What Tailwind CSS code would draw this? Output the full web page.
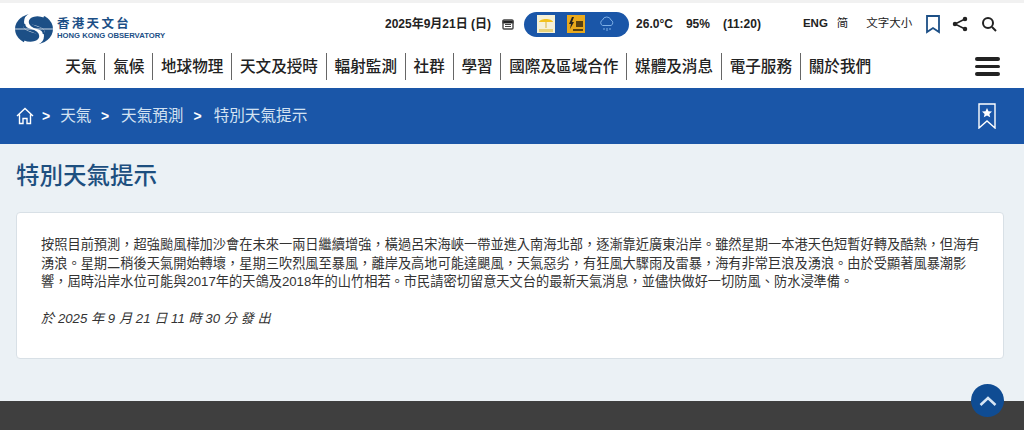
<!DOCTYPE html>
<html lang="zh-TW">
<head>
    <meta charset="UTF-8">
    <meta name="viewport" content="width=device-width, initial-scale=1.0">
    <title>特別天氣提示 - 香港天文台</title>
    <script src="https://cdn.jsdelivr.net/npm/@tailwindcss/browser@4"></script>
</head>
<body class="relative h-[430px] overflow-hidden bg-[#ebf1f5] font-['Liberation_Sans','Noto_Sans_CJK_TC',sans-serif] text-[#222]">
    <!-- Header -->
    <header class="h-[88px] bg-white border-t-[3px] border-[#f1f1f1]">
        <div class="flex h-[42px] items-center pl-[15px]">
            <!-- Logo -->
            <div class="mt-[9px] flex w-[370px] items-center gap-[4px]">
                <svg class="h-[32px] w-[38px] shrink-0" viewBox="0 0 38 32">
                    <ellipse cx="19" cy="16" rx="19" ry="15.500" fill="#1c4f86"/>
                    <path d="M29 3C20 0 12 3 12 9c0 4 5 6 10 7 3 1 5 2 5 4" fill="none" stroke="#fff" stroke-width="6"/>
                    <path d="M9 29c9 3 17 0 17-6 0-4-5-6-10-7-3-1-5-2-5-4" fill="none" stroke="#fff" stroke-width="6"/>
                    <path d="M29 6C22 3 15 5 15 9c0 3 4 5 8 6 4 1 6 3 6 6" fill="none" stroke="#1c4f86" stroke-width="2.500"/>
                    <path d="M9 26c7 3 14 1 14-3 0-3-4-5-8-6-4-1-6-3-6-6" fill="none" stroke="#1c4f86" stroke-width="2.500"/>
                    <path d="M0 16h38" stroke="#fff" stroke-width="0.800"/>
                </svg>
                <div class="flex flex-col leading-none text-[#1c4f86]">
                    <span class="text-[12.500px] font-bold leading-[13px] tracking-[2.300px]">香港天文台</span>
                    <span class="text-[7.700px] font-bold leading-[9px]">HONG KONG OBSERVATORY</span>
                </div>
            </div>
            <!-- Date and weather -->
            <span class="text-[12px] font-bold">2025年9月21日 (日)</span>
            <svg class="ml-[11px] h-[12px] w-[12px]" viewBox="0 0 12 12">
                <rect x="1" y="2" width="10" height="9" rx="1" fill="none" stroke="#444" stroke-width="1.400"/>
                <path d="M1 3h10v2H1zM3 6.500h6M3 8.500h6" stroke="#444" stroke-width="1.200"/>
            </svg>
            <div class="ml-[10px] flex h-[25px] w-[105px] items-center rounded-full bg-[#1a56a8] pl-[13px]">
                <svg class="h-[18px] w-[18px]" viewBox="0 0 18 18">
                    <rect width="18" height="18" fill="#f6f1d8"/>
                    <path d="M2 7c1-4 13-4 14 0z" fill="#f3c21d"/>
                    <path d="M9 7v6" stroke="#d9b33a"/>
                    <rect x="2" y="14" width="14" height="3" fill="#e8d27a"/>
                </svg>
                <svg class="ml-[12px] h-[18px] w-[18px]" viewBox="0 0 18 18">
                    <rect width="18" height="18" fill="#e9a91c"/>
                    <path d="M5 2 2 9h2l-1 5 4-7H5l2-5z" fill="#222"/>
                    <rect x="9" y="6" width="7" height="6" fill="#5a4210"/>
                    <rect x="6" y="14" width="10" height="2" fill="#5a4210"/>
                </svg>
                <svg class="ml-[13px] h-[18px] w-[18px]" viewBox="0 0 18 18" fill="none" stroke="#7fb0e6" stroke-width="1">
                    <path d="M4.500 10.500a3 3 0 0 1 0-5.500 4.500 4.500 0 0 1 8.500 0 3 3 0 0 1 0 5.500z"/>
                    <path d="M6 13v2M9 13v3M12 13v2"/>
                </svg>
            </div>
            <span class="ml-[7px] text-[12px] font-bold">26.0°C</span>
            <span class="ml-[13px] text-[12px] font-bold">95%</span>
            <span class="ml-[13px] text-[12px] font-bold">(11:20)</span>
            <span class="ml-[42px] text-[11.500px] font-bold">ENG</span>
            <span class="ml-[9px] text-[11.500px]">简</span>
            <span class="ml-[18px] text-[11.500px]">文字大小</span>
            <svg class="ml-[14px] h-[19px] w-[14px]" viewBox="0 0 14 19" fill="none" stroke="#1c4f86" stroke-width="1.800">
                <path d="M1 1h12v16l-6-4-6 4z"/>
            </svg>
            <svg class="ml-[12px] h-[16px] w-[16px]" viewBox="0 0 16 16" fill="none" stroke="#222" stroke-width="1.500">
                <path d="M13 3 3 8l10 5"/>
                <circle cx="13" cy="3" r="1.500" fill="#222"/>
                <circle cx="3" cy="8" r="1.500" fill="#222"/>
                <circle cx="13" cy="13" r="1.500" fill="#222"/>
            </svg>
            <svg class="ml-[13px] h-[16px] w-[16px]" viewBox="0 0 16 16" fill="none" stroke="#222" stroke-width="2">
                <circle cx="7" cy="7" r="5"/>
                <path d="m11 11 4 4"/>
            </svg>
        </div>
        <!-- Main nav -->
        <nav class="flex h-[43px] items-center pl-[57.500px] text-[15.600px] font-medium text-[#222]">
            <a class="px-[7.820px] leading-[27px]">天氣</a>
            <a class="border-l border-[#666] px-[7.820px] leading-[27px]">氣候</a>
            <a class="border-l border-[#666] px-[7.820px] leading-[27px]">地球物理</a>
            <a class="border-l border-[#666] px-[7.820px] leading-[27px]">天文及授時</a>
            <a class="border-l border-[#666] px-[7.820px] leading-[27px]">輻射監測</a>
            <a class="border-l border-[#666] px-[7.820px] leading-[27px]">社群</a>
            <a class="border-l border-[#666] px-[7.820px] leading-[27px]">學習</a>
            <a class="border-l border-[#666] px-[7.820px] leading-[27px]">國際及區域合作</a>
            <a class="border-l border-[#666] px-[7.820px] leading-[27px]">媒體及消息</a>
            <a class="border-l border-[#666] px-[7.820px] leading-[27px]">電子服務</a>
            <a class="border-l border-[#666] px-[7.820px] leading-[27px]">關於我們</a>
            <div class="ml-auto mr-[24px] flex w-[25px] flex-col gap-[4px]">
                <span class="h-[3.500px] rounded-full bg-[#222]"></span>
                <span class="h-[3.500px] rounded-full bg-[#222]"></span>
                <span class="h-[3.500px] rounded-full bg-[#222]"></span>
            </div>
        </nav>
    </header>

    <!-- Breadcrumb -->
    <div class="flex h-[56px] items-center bg-[#1a56a8] pl-[16px] pr-[28px] text-[15.600px] text-[#d3e2f2]">
        <svg class="h-[18px] w-[18px]" viewBox="0 0 18 18" fill="none" stroke="#fff" stroke-width="1.400">
            <path d="M1 9 9 1.500 17 9M3.500 7.500V16.500H7v-5h4v5h3.500V7.500"/>
        </svg>
        <span class="ml-[8px] mr-[10px] text-[14px] font-bold text-white">&gt;</span>
        <span>天氣</span>
        <span class="ml-[9.500px] mr-[12px] text-[14px] font-bold text-white">&gt;</span>
        <span>天氣預測</span>
        <span class="ml-[10px] mr-[12px] text-[14px] font-bold text-white">&gt;</span>
        <span>特別天氣提示</span>
        <svg class="ml-auto h-[26px] w-[18px]" viewBox="0 0 18 26">
            <path d="M1 1h16v24l-8-7-8 7z" fill="none" stroke="#fff" stroke-width="1.400"/>
            <path d="m9 5 1.500 3.200 3.500.4-2.600 2.300.8 3.400L9 12.600l-3.200 1.700.8-3.400L4 8.600l3.500-.4z" fill="#fff"/>
        </svg>
    </div>

    <!-- Content -->
    <main class="pl-[16px] pr-[20px]">
        <h1 class="pt-[16px] pb-[20px] text-[23.500px] leading-[32px] font-medium text-[#1d4f7f]">特別天氣提示</h1>
        <div class="h-[147px] rounded border border-[#d8e0e6] bg-white pl-[24px] pr-[20px] pt-[23px] text-[13.230px] leading-[18.500px] text-[#333] [font-feature-settings:'locl']">
            <p>按照目前預測，超強颱風樺加沙會在未來一兩日繼續增強，橫過呂宋海峽一帶並進入南海北部，逐漸靠近廣東沿岸。雖然星期一本港天色短暫好轉及酷熱，但海有湧浪。星期二稍後天氣開始轉壞，星期三吹烈風至暴風，離岸及高地可能達颶風，天氣惡劣，有狂風大驟雨及雷暴，海有非常巨浪及湧浪。由於受顯著風暴潮影響，屆時沿岸水位可能與2017年的天鴿及2018年的山竹相若。市民請密切留意天文台的最新天氣消息，並儘快做好一切防風、防水浸準備。</p>
            <p class="mt-[18px] italic">於 2025 年 9 月 21 日 11 時 30 分 發 出</p>
        </div>
    </main>

    <!-- Footer -->
    <footer class="absolute inset-x-0 top-[401px] h-[29px] bg-[#3f3f3f]"></footer>

    <!-- Back to top -->
    <div class="absolute left-[971px] top-[384px] flex h-[33px] w-[33px] items-center justify-center rounded-full bg-[#0f4c93]">
        <svg class="h-[12px] w-[18px]" viewBox="0 0 18 12" fill="none" stroke="#d7e6f5" stroke-width="2.500">
            <path d="m1.500 10 7.500-7 7.500 7"/>
        </svg>
    </div>
</body>
</html>
